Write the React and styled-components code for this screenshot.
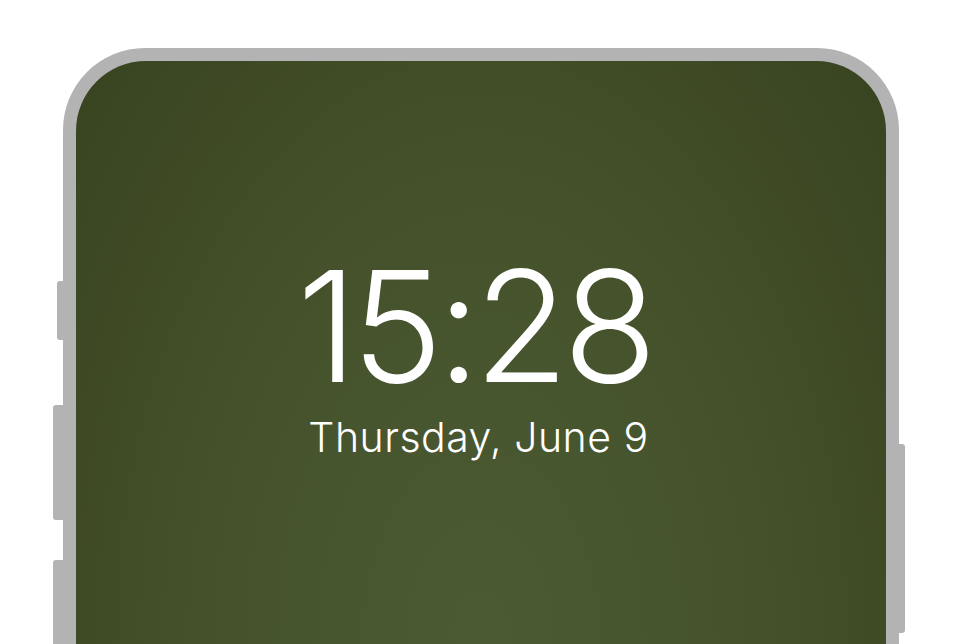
import React from 'react';
import styled, { createGlobalStyle } from 'styled-components';

const GlobalStyle = createGlobalStyle`
  html, body {
    margin: 0;
    padding: 0;
    background: #ffffff;
    overflow: hidden;
  }
`;

const Stage = styled.div`
  height: 644px;
  overflow: hidden;
  padding: 48px 0 0 63px;
  box-sizing: border-box;
`;

const Frame = styled.div`
  position: relative;
  width: 836px;
  height: 900px;
  box-sizing: border-box;
  padding: 13px;
  background: #b3b3b3;
  border-radius: 82px;
`;

// hardware keys sticking out of the frame edges
const SideButton = styled.span`
  position: absolute;
  top: ${p => p.top}px;
  height: ${p => p.length}px;
  width: ${p => p.depth}px;
  background: #b3b3b3;
  ${p =>
    p.side === 'left'
      ? `right: 100%; border-radius: 3px 0 0 3px;`
      : `left: 100%; border-radius: 0 3px 3px 0;`}
`;

const Screen = styled.div`
  height: 100%;
  border-radius: 70px;
  background: radial-gradient(
    ellipse 560px 900px at 50% 580px,
    #4c5a34 0%,
    #47552e 35%,
    #414d27 65%,
    #37421f 100%
  );
  display: flex;
  flex-direction: column;
  align-items: center;
  padding-top: 188px;
  box-sizing: border-box;
  font-family: Inter, 'Liberation Sans', sans-serif;
  color: #ffffff;
`;

const Time = styled.div`
  font-size: 154px;
  line-height: 154px;
  font-weight: 300;
  letter-spacing: -6px;
  padding-right: 14px;
`;

const DateLine = styled.div`
  margin-top: 14px;
  padding-right: 5px;
  font-size: 41px;
  line-height: 41px;
  font-weight: 300;
  letter-spacing: 0.5px;
`;

export default function App() {
  return (
    <>
      <GlobalStyle />
      <Stage>
        <Frame>
          <SideButton side="left" top={233} length={59} depth={6} />
          <SideButton side="left" top={357} length={115} depth={10} />
          <SideButton side="left" top={512} length={115} depth={10} />
          <SideButton side="right" top={396} length={189} depth={6} />
          <Screen>
            <Time>15:28</Time>
            <DateLine>Thursday, June 9</DateLine>
          </Screen>
        </Frame>
      </Stage>
    </>
  );
}
